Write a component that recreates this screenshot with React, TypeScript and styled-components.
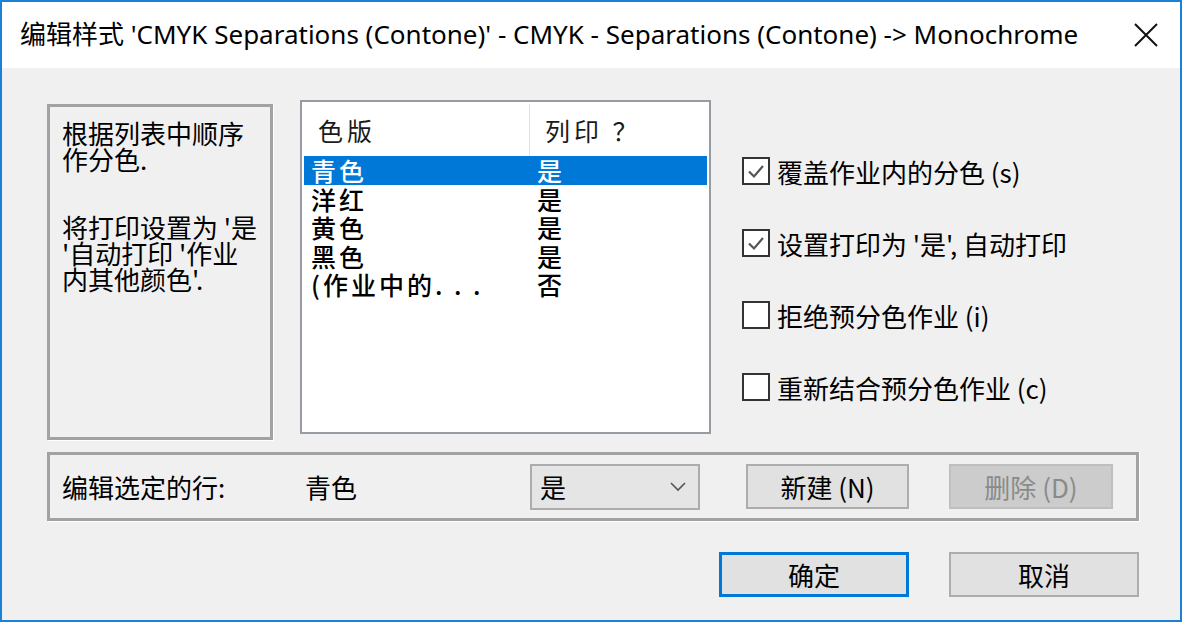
import React from 'react';
import styled, { createGlobalStyle } from 'styled-components';

const Global = createGlobalStyle`
  html, body { margin: 0; padding: 0; background: #ffffff; }
  body { font-family: "Noto Sans CJK SC", "Noto Sans", sans-serif; }
  * { box-sizing: border-box; }
`;

const Window = styled.div`
  width: 1182px;
  height: 622px;
  border: 2px solid #1a80d8;
  display: flex;
  flex-direction: column;
  background: #f0f0f0;
  overflow: hidden;
`;

const TitleBar = styled.div`
  height: 66px;
  flex: none;
  background: #ffffff;
  display: flex;
  align-items: center;
  padding-left: 18px;
`;

const Title = styled.div`
  flex: 1;
  font-family: "Noto Sans", "Noto Sans CJK SC", sans-serif;
  font-size: 26px;
  color: #000;
  white-space: nowrap;
  padding-bottom: 4px;
`;

const Close = styled.div`
  width: 68px;
  height: 66px;
  display: flex;
  align-items: center;
  justify-content: center;
`;

const Body = styled.div`
  flex: 1;
  display: flex;
  flex-direction: column;
  padding: 32px 41px 0 45px;
  font-family: "Noto Sans CJK SC", sans-serif;
  font-size: 26px;
  color: #000;
`;

const TopRow = styled.div`
  display: flex;
  align-items: flex-start;
  height: 340px;
`;

const Frame = styled.div`
  border: 3px solid #a2a2a2;
  box-shadow: 1px 1px 0 #ffffff;
`;

const InfoBox = styled(Frame)`
  width: 226px;
  height: 336px;
  margin-top: 4px;
  padding: 13px 0 0 12px;
  line-height: 26px;
`;

const Para = styled.p<{ $gap?: number }>`
  margin: ${(p) => p.$gap ?? 0}px 0 0 0;
  white-space: pre-line;
`;

const ListBox = styled.div`
  margin-left: 27px;
  width: 411px;
  height: 334px;
  background: #ffffff;
  border: 2px solid #979ca3;
  padding: 2px;
  display: flex;
  flex-direction: column;
`;

const ListHeader = styled.div`
  display: grid;
  grid-template-columns: 226px 1fr;
  height: 52px;
  flex: none;
`;

const HeaderCell = styled.div<{ $divider?: boolean }>`
  display: flex;
  align-items: center;
  padding-left: ${(p) => (p.$divider ? 14 : 15)}px;
  border-right: ${(p) => (p.$divider ? '1px solid #e3e3e3' : 'none')};
  letter-spacing: 4px;
  color: #1a1a1a;
  font-size: 25px;
`;

const Row = styled.div<{ $selected?: boolean }>`
  display: grid;
  grid-template-columns: 226px 1fr;
  height: 28.6px;
  line-height: 28.6px;
  background: ${(p) => (p.$selected ? '#0078d7' : 'transparent')};
  color: ${(p) => (p.$selected ? '#ffffff' : '#000')};
  font-weight: 500;
  font-size: 25px;
`;

const Cell = styled.div<{ $pad: number }>`
  padding-left: ${(p) => p.$pad}px;
  letter-spacing: 3px;
  white-space: nowrap;
`;

const CheckColumn = styled.div`
  margin-left: 31px;
  padding-top: 57px;
  width: 340px;
  display: flex;
  flex-direction: column;
  gap: 44px;
`;

const CheckRow = styled.div`
  display: flex;
  align-items: center;
  gap: 7px;
  height: 28px;
  white-space: nowrap;
`;

const Box = styled.div`
  flex: none;
  width: 28px;
  height: 28px;
  border: 2px solid #333333;
  background: #ffffff;
  display: flex;
  align-items: center;
  justify-content: center;
`;

const GroupBox = styled(Frame)`
  margin-top: 12px;
  height: 69px;
  display: flex;
  align-items: center;
  padding-left: 12px;
`;

const GroupLabel = styled.div<{ $w: number }>`
  width: ${(p) => p.$w}px;
  flex: none;
  white-space: nowrap;
`;

const Select = styled.div`
  width: 170px;
  height: 46px;
  flex: none;
  background: #e5e5e5;
  border: 2px solid #acacac;
  display: flex;
  align-items: center;
  justify-content: space-between;
  padding: 0 12px 0 8px;
`;

const Button = styled.div<{ $w: number; $ml?: number; $primary?: boolean; $disabled?: boolean }>`
  width: ${(p) => p.$w}px;
  height: 45px;
  flex: none;
  margin-left: ${(p) => p.$ml ?? 0}px;
  display: flex;
  align-items: center;
  justify-content: center;
  background: ${(p) => (p.$disabled ? '#cccccc' : '#e1e1e1')};
  border: ${(p) => (p.$primary ? '3px solid #0078d7' : p.$disabled ? '2px solid #bfbfbf' : '2px solid #adadad')};
  color: ${(p) => (p.$disabled ? '#8a8a8a' : '#000')};
  font-size: 26px;
`;

const Footer = styled.div`
  margin-top: 31px;
  display: flex;
  justify-content: flex-end;
  gap: 40px;
`;

const CheckMark = () => (
  <svg width="20" height="20" viewBox="0 0 20 20">
    <path d="M3 10.5 L8 15.5 L17 5" fill="none" stroke="#555" strokeWidth="2.2" />
  </svg>
);

const CheckBox: React.FC<{ checked?: boolean; label: string }> = ({ checked, label }) => (
  <CheckRow>
    <Box>{checked && <CheckMark />}</Box>
    <span>{label}</span>
  </CheckRow>
);

const rows = [
  { name: '青色', print: '是' },
  { name: '洋红', print: '是' },
  { name: '黄色', print: '是' },
  { name: '黑色', print: '是' },
  { name: '(作业中的. . .', print: '否' },
];

export default function App() {
  return (
    <>
      <Global />
      <Window>
        <TitleBar>
          <Title>编辑样式 'CMYK Separations (Contone)' - CMYK - Separations (Contone) -&gt; Monochrome</Title>
          <Close>
            <svg width="24" height="24" viewBox="0 0 24 24">
              <path d="M1 1 L23 23 M23 1 L1 23" stroke="#111" strokeWidth="2" fill="none" />
            </svg>
          </Close>
        </TitleBar>
        <Body>
          <TopRow>
            <InfoBox>
              <Para>{'根据列表中顺序\n作分色.'}</Para>
              <Para $gap={42}>{"将打印设置为 '是\n'自动打印 '作业\n内其他颜色'."}</Para>
            </InfoBox>
            <ListBox>
              <ListHeader>
                <HeaderCell $divider>色版</HeaderCell>
                <HeaderCell>列印 ？</HeaderCell>
              </ListHeader>
              {rows.map((r, i) => (
                <Row key={r.name} $selected={i === 0}>
                  <Cell $pad={7}>{r.name}</Cell>
                  <Cell $pad={7}>{r.print}</Cell>
                </Row>
              ))}
            </ListBox>
            <CheckColumn>
              <CheckBox checked label="覆盖作业内的分色 (s)" />
              <CheckBox checked label="设置打印为 '是', 自动打印" />
              <CheckBox label="拒绝预分色作业 (i)" />
              <CheckBox label="重新结合预分色作业 (c)" />
            </CheckColumn>
          </TopRow>
          <GroupBox>
            <GroupLabel $w={243}>编辑选定的行:</GroupLabel>
            <GroupLabel $w={225}>青色</GroupLabel>
            <Select>
              <span>是</span>
              <svg width="16" height="10" viewBox="0 0 16 10">
                <path d="M1 1 L8 8 L15 1" fill="none" stroke="#555" strokeWidth="1.6" />
              </svg>
            </Select>
            <Button $w={163} $ml={46}>新建 (N)</Button>
            <Button $w={164} $ml={40} $disabled>删除 (D)</Button>
          </GroupBox>
          <Footer>
            <Button $w={190} $primary>确定</Button>
            <Button $w={190}>取消</Button>
          </Footer>
        </Body>
      </Window>
    </>
  );
}
